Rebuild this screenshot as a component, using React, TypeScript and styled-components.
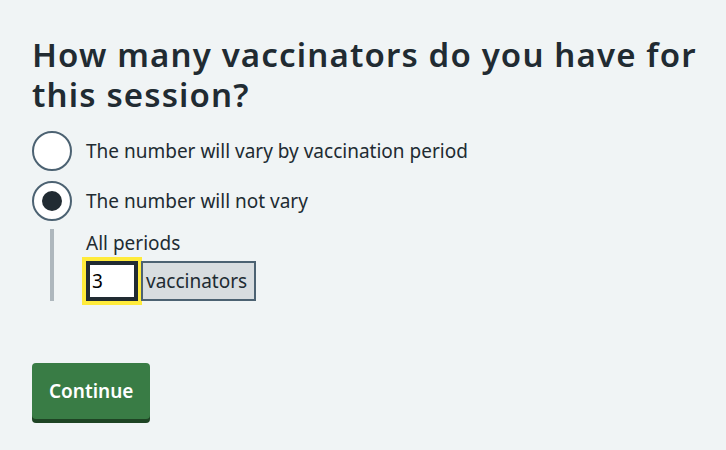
import React, { useState } from "react";
import styled, { createGlobalStyle } from "styled-components";

const GlobalStyle = createGlobalStyle`
  html, body {
    margin: 0;
    padding: 0;
    background: #f0f4f5;
  }
  body {
    font-family: "Noto Sans", "Open Sans", Arial, sans-serif;
    color: #212b32;
  }
`;

const Page = styled.main`
  padding: 35px 16px 0 32px;
  min-height: 450px;
  box-sizing: border-box;
`;

const Fieldset = styled.fieldset`
  border: 0;
  margin: 0;
  padding: 0;
  min-width: 0;
`;

const Legend = styled.legend`
  padding: 0;
  margin: 0 0 16px;
  font-size: 33px;
  line-height: 40px;
  font-weight: 600;
  letter-spacing: 1.15px;
`;

const RadioList = styled.div`
  display: flex;
  flex-direction: column;
  gap: 10px;
`;

const RadioItem = styled.label`
  display: flex;
  align-items: center;
  gap: 14px;
  cursor: pointer;
  font-size: 19px;
  line-height: 28px;
`;

const RadioCircle = styled.span<{ $checked: boolean }>`
  position: relative;
  flex: none;
  width: 40px;
  height: 40px;
  box-sizing: border-box;
  border: 2px solid #4c6272;
  border-radius: 50%;
  background: #ffffff;

  &::after {
    content: "";
    position: absolute;
    top: 8px;
    left: 8px;
    width: 20px;
    height: 20px;
    border-radius: 50%;
    background: #212b32;
    opacity: ${(p) => (p.$checked ? 1 : 0)};
  }
`;

const Conditional = styled.div`
  margin: -2px 0 0 18px;
  padding-left: 32px;
  border-left: 4px solid #aeb7bd;
`;

const FieldLabel = styled.label`
  display: block;
  font-size: 19px;
  line-height: 28px;
  margin-bottom: 4px;
`;

const InputWrap = styled.div`
  display: flex;
  align-items: stretch;
`;

const NumberInput = styled.input`
  width: 52px;
  height: 40px;
  box-sizing: border-box;
  margin: 0;
  padding: 0 2px;
  font-family: "Noto Sans", Arial, sans-serif;
  font-size: 19px;
  color: #000000;
  background: #ffffff;
  border: 4px solid #212b32;
  border-radius: 0;
  outline: 4px solid #ffeb3b;
  outline-offset: 0;
`;

const Suffix = styled.span`
  display: flex;
  align-items: center;
  height: 40px;
  box-sizing: border-box;
  padding: 0 7px 0 3px;
  margin-left: 3px;
  font-size: 19px;
  background: #d8dde0;
  border: 2px solid #4c6272;
`;

const Button = styled.button`
  margin-top: 62px;
  padding: 12px 15px;
  font-family: "Noto Sans", Arial, sans-serif;
  font-size: 19px;
  line-height: 28px;
  font-weight: 600;
  color: #ffffff;
  background: #397c45;
  border: 2px solid transparent;
  border-radius: 4px;
  box-shadow: 0 4px 0 #1e4424;
  cursor: pointer;
`;

const options = [
  "The number will vary by vaccination period",
  "The number will not vary",
];

export default function App() {
  const [choice, setChoice] = useState(1);
  const [count, setCount] = useState("3");

  return (
    <>
      <GlobalStyle />
      <Page>
        <Fieldset>
          <Legend>How many vaccinators do you have for this session?</Legend>
          <RadioList>
            {options.map((text, i) => (
              <React.Fragment key={text}>
                <RadioItem onClick={() => setChoice(i)}>
                  <RadioCircle $checked={choice === i} />
                  {text}
                </RadioItem>
                {choice === 1 && i === 1 && (
                  <Conditional>
                    <FieldLabel htmlFor="all-periods">All periods</FieldLabel>
                    <InputWrap>
                      <NumberInput
                        id="all-periods"
                        value={count}
                        onChange={(e) => setCount(e.target.value)}
                      />
                      <Suffix>vaccinators</Suffix>
                    </InputWrap>
                  </Conditional>
                )}
              </React.Fragment>
            ))}
          </RadioList>
        </Fieldset>
        <Button>Continue</Button>
      </Page>
    </>
  );
}
